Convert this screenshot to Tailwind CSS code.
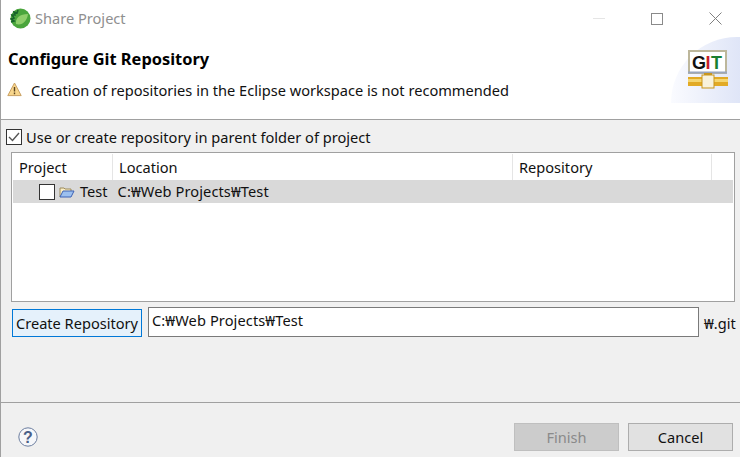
<!DOCTYPE html>
<html lang="en">
  <head>
    <meta charset="UTF-8" />
    <title>Share Project</title>
    <script src="https://cdn.jsdelivr.net/npm/@tailwindcss/browser@4"></script>
  </head>
  <body class="overflow-hidden bg-[#f0f0f0]">
    <div class="w-[740px] h-[457px] flex flex-col border-l border-[#a0a0a0] bg-[#f0f0f0] font-['Noto_Sans','Open_Sans',sans-serif] text-[14.6px] text-[#111] leading-none">
      <!-- Title bar -->
      <div class="h-[37px] shrink-0 bg-white flex items-center pl-[9px]">
        <svg width="21" height="21" viewBox="0 0 21 21">
          <circle cx="10.5" cy="10.5" r="10" fill="#4aa53c" />
          <path d="M1 14l3-1-3-2 3-1-2-3 3 0-1-3 3 1 1-3" stroke="#17642a" stroke-width="1.6" fill="none" />
          <path d="M6 16c-1-6 4-10 12-10-1 7-6 12-12 10z" fill="#8fce6b" />
        </svg>
        <span class="ml-[4px] text-[#8f8f8f]">Share Project</span>
        <div class="ml-auto flex items-center">
          <div class="w-3 h-px bg-[#e5e5e5]"></div>
          <div class="ml-[46px] w-3 h-3 border border-[#8a8a8a]"></div>
          <svg class="ml-[46px] mr-[18px]" width="13" height="13" viewBox="0 0 13 13">
            <path d="M.5.5l12 12M12.5.5l-12 12" stroke="#808080" fill="none" />
          </svg>
        </div>
      </div>

      <!-- Header -->
      <div class="relative h-[83px] shrink-0 bg-white border-b border-[#a0a0a0] pl-[6px]">
        <h1 class="pt-[14px] pl-px text-[16.4px] font-bold text-black">Configure Git Repository</h1>
        <div class="mt-[15px] flex items-center">
          <svg width="15" height="15" viewBox="0 0 15 15">
            <path d="M7.5 1L14.2 13.6H.8z" fill="#f8d68c" stroke="#c9a063" stroke-linejoin="round" />
            <path d="M7.5 5v4.5M7.5 10.5v1.8" stroke="#5a4320" stroke-width="1.4" />
          </svg>
          <span class="ml-[9px]">Creation of repositories in the Eclipse workspace is not recommended</span>
        </div>
        <div class="absolute right-0 top-0 w-[69px] h-[66px] bg-[linear-gradient(to_right,#fafbff,#dfe5f7)] rounded-tl-[68px]">
          <svg class="absolute left-[17px] top-[13px]" width="41" height="39" viewBox="0 0 41 39">
            <rect x="1" y="1" width="37" height="22" fill="#fff" stroke="#bdb79b" stroke-width="2" />
            <path d="M0 22.5h39" stroke="#9aa6bd" stroke-width="2" />
            <rect x="16" y="23" width="8" height="5" fill="#c8961e" />
            <rect x="0" y="27" width="40" height="9" fill="#e2aa25" />
            <rect x="0" y="29" width="40" height="3" fill="#f5d670" />
            <rect x="14" y="25" width="12" height="13" fill="#f8f2dc" stroke="#c8961e" />
            <text x="4" y="19" font-size="18" font-weight="700" font-family="Liberation Sans" fill="#111">G</text>
            <text x="17.5" y="19" font-size="18" font-weight="700" font-family="Liberation Sans" fill="#c8202a">I</text>
            <text x="23" y="19" font-size="18" font-weight="700" font-family="Liberation Sans" fill="#1a7f30">T</text>
          </svg>
        </div>
      </div>

      <!-- Body -->
      <div class="flex-1 flex flex-col pl-[4px] pr-[2px]">
        <label class="mt-[9px] ml-px flex items-center">
          <span class="w-4 h-4 border border-[#333] bg-white flex items-center justify-center">
            <svg width="12" height="10" viewBox="0 0 12 10"><path d="M1 5l3.5 3.5L11 1" stroke="#555" stroke-width="1.4" fill="none" /></svg>
          </span>
          <span class="ml-[4px]">Use or create repository in parent folder of project</span>
        </label>

        <!-- Table -->
        <div class="mt-[7px] ml-[6px] mr-[3px] h-[150px] bg-white border border-[#a0a0a0] pt-[1px]">
          <div class="h-[26px] flex items-center">
            <div class="w-[101px] h-full pl-[7px] flex items-center border-r border-[#e5e5e5]">Project</div>
            <div class="w-[400px] h-full pl-[6px] flex items-center border-r border-[#e5e5e5]">Location</div>
            <div class="w-[199px] h-full pl-[6px] flex items-center border-r border-[#e5e5e5]">Repository</div>
          </div>
          <div class="h-[23px] ml-[1px] mr-px bg-[#d9d9d9] flex items-center">
            <span class="ml-[26px] w-4 h-4 border border-[#333] bg-white"></span>
            <svg class="ml-[4px]" width="16" height="12" viewBox="0 0 16 12">
              <path d="M1 11V2h4l1 1h6v2" fill="#fbeec4" stroke="#9c8a5a" />
              <path d="M1 11l3-6h11l-3 6z" fill="#9cc0ef" stroke="#3d62b5" />
            </svg>
            <span class="ml-[5px]">Test</span>
            <span class="ml-[10px] tracking-[0.1px]">C:₩Web Projects₩Test</span>
          </div>
        </div>

        <!-- Create repository row -->
        <div class="mt-[5px] ml-[7px] flex items-center">
          <button class="w-[130px] h-[28px] mt-px pt-px bg-[#e5f1fb] border border-[#0078d7]">Create Repository</button>
          <div class="ml-[6px] w-[551px] h-[30px] pb-[4px] bg-white border border-[#7a7a7a] pl-[3px] flex items-center tracking-[0.1px]">C:₩Web Projects₩Test</div>
          <span class="ml-[5px] mt-[2px]">₩.git</span>
        </div>
      </div>

      <!-- Footer -->
      <div class="h-[55px] shrink-0 border-t border-[#a0a0a0] flex items-center pt-[13px] pl-[17px] pr-[7px]">
        <svg width="20" height="20" viewBox="0 0 20 20">
          <circle cx="10" cy="10" r="9.2" fill="#f6f7fa" stroke="#6b7d9f" stroke-width="1" />
          <text x="10" y="15.5" text-anchor="middle" font-size="16" font-weight="700" font-family="Liberation Sans" fill="#4a5f88">?</text>
        </svg>
        <button class="ml-auto w-[105px] h-[28px] pt-px bg-[#cccccc] border border-[#bfbfbf] text-[#8a8a8a]">Finish</button>
        <button class="ml-[9px] w-[105px] h-[28px] pt-px bg-[#e1e1e1] border border-[#adadad]">Cancel</button>
      </div>
    </div>
  </body>
</html>
